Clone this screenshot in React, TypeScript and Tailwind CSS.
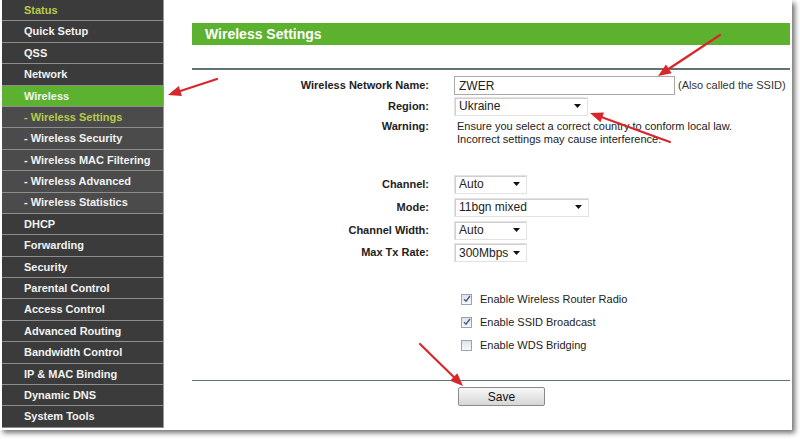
import React from "react";

const menu = [
  { label: "Status", kind: "main", hi: true },
  { label: "Quick Setup", kind: "main" },
  { label: "QSS", kind: "main" },
  { label: "Network", kind: "main" },
  { label: "Wireless", kind: "active" },
  { label: "- Wireless Settings", kind: "sub", hi: true },
  { label: "- Wireless Security", kind: "sub" },
  { label: "- Wireless MAC Filtering", kind: "sub" },
  { label: "- Wireless Advanced", kind: "sub" },
  { label: "- Wireless Statistics", kind: "sub" },
  { label: "DHCP", kind: "main" },
  { label: "Forwarding", kind: "main" },
  { label: "Security", kind: "main" },
  { label: "Parental Control", kind: "main" },
  { label: "Access Control", kind: "main" },
  { label: "Advanced Routing", kind: "main" },
  { label: "Bandwidth Control", kind: "main" },
  { label: "IP & MAC Binding", kind: "main" },
  { label: "Dynamic DNS", kind: "main" },
  { label: "System Tools", kind: "main" },
];

const Caret = () => (
  <svg width="7" height="4" viewBox="0 0 7 4" className="shrink-0">
    <path d="M0 0h7L3.5 4z" fill="#111" />
  </svg>
);

const Select = ({ value, width }: { value: string; width: string }) => (
  <div
    className={`${width} h-[19px] flex items-center justify-between pl-[4px] pr-[6px] bg-white border border-[#e2e2e2] shadow-[inset_1px_1px_0_#d0d0d0] text-[12px] text-[#222]`}
  >
    <span>{value}</span>
    <Caret />
  </div>
);

const Check = ({ on }: { on: boolean }) => (
  <span className="w-[11px] h-[11px] border border-[#9aa3b5] bg-gradient-to-b from-[#dfe3ea] to-[#f7f8fa] flex items-center justify-center">
    {on && (
      <svg width="8" height="8" viewBox="0 0 8 8">
        <path d="M1 4.2l2 2L7 1" fill="none" stroke="#4a5a8a" strokeWidth="1.4" />
      </svg>
    )}
  </span>
);

const Row = ({ label, children, h = "h-[23px]" }: { label: string; children: React.ReactNode; h?: string }) => (
  <div className={`flex items-center ${h}`}>
    <div className="w-[237px] text-right font-bold text-[11px] text-[#222]">{label}</div>
    <div className="ml-[25px] flex items-center">{children}</div>
  </div>
);

const Arrow = ({ x1, y1, x2, y2 }: { x1: number; y1: number; x2: number; y2: number }) => {
  const a = Math.atan2(y2 - y1, x2 - x1);
  const l = 14;
  const w = 0.38;
  const p1 = [x2 - l * Math.cos(a - w), y2 - l * Math.sin(a - w)];
  const p2 = [x2 - l * Math.cos(a + w), y2 - l * Math.sin(a + w)];
  const bx = x2 - 9 * Math.cos(a);
  const by = y2 - 9 * Math.sin(a);
  return (
    <g>
      <line x1={x1} y1={y1} x2={bx} y2={by} stroke="#d9262b" strokeWidth="2.2" strokeLinecap="round" />
      <polygon points={`${x2},${y2} ${p1[0]},${p1[1]} ${p2[0]},${p2[1]}`} fill="#d9262b" />
    </g>
  );
};

export default function App() {
  return (
    <div className="w-[800px] h-[439px] bg-white relative overflow-hidden font-['Liberation_Sans',Arial,sans-serif]">
      <div className="w-[792px] h-[430px] bg-white flex shadow-[3px_3px_5px_rgba(0,0,0,0.55)]">
        <div className="ml-[2px] w-[162px] bg-[#3a3a3a] border-r border-[#9a9a9a] h-[428px] flex flex-col">
          {menu.map((m, i) => {
            const bg = m.kind === "active" ? "bg-[#5cb22f]" : m.kind === "sub" ? "bg-[#4b4b4b]" : "bg-[#3b3b3b]";
            const color = m.hi ? "text-[#b6cc4a]" : "text-[#f2f2f2]";
            return (
              <div
                key={i}
                className={`h-[21.4px] flex items-center pl-[22px] ${bg} ${color} text-[11px] font-bold border-b-[1.5px] border-[#8e8e8e]`}
              >
                {m.label}
              </div>
            );
          })}
        </div>

        <div className="flex-1 pl-[28px] pr-[2px] flex flex-col">
          <div className="mt-[23px] h-[22px] bg-[#5cb22f] flex items-center pl-[13px] text-white font-bold text-[14px]">
            Wireless Settings
          </div>
          <div className="mt-[23px] h-[1.5px] bg-[#5f766c]" />

          <div className="mt-[6px] flex flex-col">
            <Row label="Wireless Network Name:" h="h-[20px]">
              <div className="w-[221px] h-[19px] border border-[#a9a9a9] bg-white flex items-center pl-[4px] text-[12px] text-[#222]">
                ZWER
              </div>
              <span className="ml-[3px] text-[11px] text-[#333]">(Also called the SSID)</span>
            </Row>
            <Row label="Region:" h="h-[21px]">
              <Select value="Ukraine" width="w-[134px]" />
            </Row>
            <div className="flex mt-[3px]">
              <div className="w-[237px] text-right font-bold text-[11px] text-[#222] leading-[13px]">Warning:</div>
              <div className="ml-[28px] text-[11px] text-[#222] leading-[13px]">
                Ensure you select a correct country to conform local law.
                <br />
                Incorrect settings may cause interference.
              </div>
            </div>
          </div>

          <div className="mt-[27px] flex flex-col">
            <Row label="Channel:">
              <Select value="Auto" width="w-[73px]" />
            </Row>
            <Row label="Mode:">
              <Select value="11bgn mixed" width="w-[135px]" />
            </Row>
            <Row label="Channel Width:">
              <Select value="Auto" width="w-[73px]" />
            </Row>
            <Row label="Max Tx Rate:" h="h-[22px]">
              <Select value="300Mbps" width="w-[73px]" />
            </Row>
          </div>

          <div className="mt-[24px] flex flex-col pl-[269px]">
            {[
              ["Enable Wireless Router Radio", true],
              ["Enable SSID Broadcast", true],
              ["Enable WDS Bridging", false],
            ].map(([t, on], i) => (
              <div key={i} className="h-[23px] flex items-center">
                <Check on={on as boolean} />
                <span className="ml-[8px] text-[11px] text-[#222]">{t as string}</span>
              </div>
            ))}
          </div>

          <div className="mt-[23px] h-[1.5px] bg-[#5f766c]" />
          <div className="mt-[6px] pl-[266px]">
            <button className="w-[87px] h-[19px] border border-[#8a8a8a] rounded-[2px] bg-gradient-to-b from-[#f8f8f8] to-[#d6d6d6] text-[12px] text-[#111] flex items-center justify-center">
              Save
            </button>
          </div>
        </div>
      </div>

      <svg className="absolute inset-0 pointer-events-none" width="800" height="439">
        <Arrow x1={217} y1={79} x2={168} y2={95} />
        <Arrow x1={720} y1={35} x2={658} y2={76} />
        <Arrow x1={670} y1={142} x2={590} y2={113} />
        <Arrow x1={420} y1={344} x2={463} y2={386} />
      </svg>
    </div>
  );
}
